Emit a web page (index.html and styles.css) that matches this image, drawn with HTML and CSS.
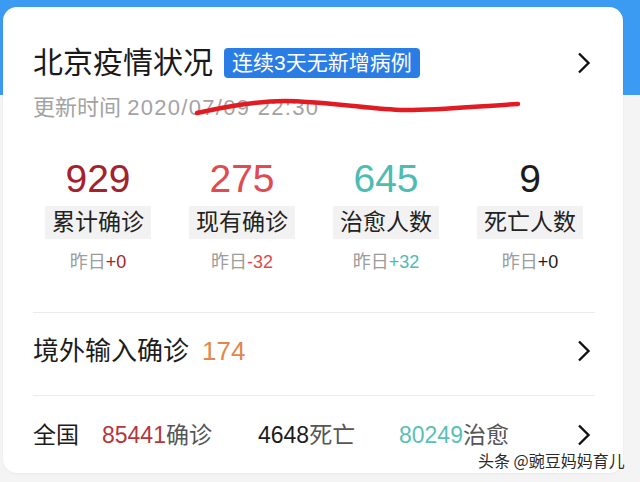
FILE: index.html
```html
<!DOCTYPE html>
<html lang="zh-CN">
<head>
  <meta charset="UTF-8">
  <meta name="viewport" content="width=device-width, initial-scale=1.0">
  <title>北京疫情状况</title>
  <link rel="stylesheet" href="styles.css">
</head>
<body>
  <div class="page">
    <div class="card">
      <div class="head">
        <h1 class="title">北京疫情状况</h1>
        <span class="badge">连续3天无新增病例</span>
        <svg class="chev" width="14" height="22" viewBox="0 0 14 22"><path d="M2 1.5 L11.5 11 L2 20.5"/></svg>
      </div>
      <p class="update">更新时间 <span class="date">2020/07/09 22:30</span></p>

      <ul class="stats">
        <li class="stat">
          <div class="num c-total">929</div>
          <div class="label">累计确诊</div>
          <div class="delta">昨日<span class="c-total">+0</span></div>
        </li>
        <li class="stat">
          <div class="num c-now">275</div>
          <div class="label">现有确诊</div>
          <div class="delta">昨日<span class="c-now">-32</span></div>
        </li>
        <li class="stat">
          <div class="num c-cure">645</div>
          <div class="label">治愈人数</div>
          <div class="delta">昨日<span class="c-cure">+32</span></div>
        </li>
        <li class="stat">
          <div class="num c-dead">9</div>
          <div class="label">死亡人数</div>
          <div class="delta">昨日<span class="c-dead">+0</span></div>
        </li>
      </ul>

      <div class="row import">
        <span>境外输入确诊</span>
        <span class="import-num">174</span>
        <svg class="chev" width="14" height="22" viewBox="0 0 14 22"><path d="M2 1.5 L11.5 11 L2 20.5"/></svg>
      </div>

      <div class="row nation">
        <span class="c-dead">全国</span>
        <span><span class="c-nat-total">85441</span>确诊</span>
        <span><span class="c-dead">4648</span>死亡</span>
        <span><span class="c-nat-cure">80249</span>治愈</span>
        <svg class="chev" width="14" height="22" viewBox="0 0 14 22"><path d="M2 1.5 L11.5 11 L2 20.5"/></svg>
      </div>
    </div>

    <!-- 红笔划线 -->
    <svg class="scribble" width="640" height="482" viewBox="0 0 640 482">
      <path d="M197 113 C 225 107, 255 101, 285 101 C 320 101, 360 108, 400 110 C 430 111, 480 106, 518 104"/>
    </svg>
    <div class="watermark">头条 @豌豆妈妈育儿</div>
  </div>
</body>
</html>
```

FILE: styles.css
```css
body {
  margin: 0;
  font-family: "Liberation Sans", "Noto Sans CJK SC", sans-serif;
  color: #1c1c1c;
}
ul, li, p, h1 {
  list-style: none;
  margin: 0;
  padding: 0;
}
.page {
  position: relative;
  width: 640px;
  height: 482px;
  box-sizing: border-box;
  padding: 7px 17px 0 3px;
  background: linear-gradient(#3b9af2 0, #3b9af2 95px, #f4f4f4 95px);
  overflow: hidden;
}
.card {
  height: 466px;
  box-sizing: border-box;
  padding: 36px 28px 0 30px;
  background: #fff;
  border-radius: 14px;
  box-shadow: 0 1px 3px rgba(0, 0, 0, .05);
}
.chev {
  margin-left: auto;
  margin-right: 4px;
  flex-shrink: 0;
}
.chev path {
  fill: none;
  stroke: #111;
  stroke-width: 2.4;
}

/* 标题 */
.head {
  display: flex;
  align-items: center;
  height: 40px;
}
.title {
  font-size: 30px;
  line-height: 40px;
  font-weight: 400;
  color: #1a1a1a;
}
.badge {
  margin-left: 11px;
  padding: 0 8px;
  height: 30px;
  line-height: 30px;
  font-size: 21px;
  color: #fff;
  background: #2b7de6;
  border-radius: 4px;
}
.update {
  margin-top: 10px;
  font-size: 22px;
  line-height: 30px;
  color: #a3a3a3;
}
.date {
  letter-spacing: 1.3px;
}

/* 四项数据 */
.stats {
  display: grid;
  grid-template-columns: repeat(4, 1fr);
  margin: 34px -7px 0 -7px;
}
.stat {
  display: flex;
  flex-direction: column;
  align-items: center;
}
.num {
  font-size: 39px;
  line-height: 44px;
}
.label {
  margin-top: 5px;
  padding: 0 7px;
  font-size: 23px;
  line-height: 33px;
  background: #f2f2f2;
  color: #222;
}
.delta {
  margin-top: 10px;
  font-size: 18px;
  line-height: 26px;
  color: #9c9c9c;
}
.c-total { color: #a4222c; }
.c-now { color: #e04a50; }
.c-cure { color: #4dbcb3; }
.c-dead { color: #1c1c1c; }
.c-nat-total { color: #b3373d; }
.c-nat-cure { color: #5bbfb5; }

/* 列表行 */
.row {
  border-top: 1px solid #ebebeb;
}
.import {
  display: flex;
  align-items: center;
  margin-top: 37px;
  padding: 24px 0 30px;
  font-size: 26px;
  line-height: 28px;
  color: #1c1c1c;
}
.import-num {
  margin-left: 13px;
  color: #e2864a;
}
.nation {
  display: grid;
  grid-template-columns: 69px 156px 141px 1fr auto;
  align-items: center;
  padding-top: 25px;
  font-size: 23px;
  line-height: 28px;
  color: #555;
}

.scribble {
  position: absolute;
  left: 0;
  top: 0;
  pointer-events: none;
}
.scribble path {
  fill: none;
  stroke: #e21b23;
  stroke-width: 4.5;
  stroke-linecap: round;
}
.watermark {
  position: absolute;
  left: 478px;
  top: 450px;
  font-family: "Noto Sans CJK SC", sans-serif;
  font-size: 16px;
  line-height: 20px;
  color: #2a2a2a;
  text-shadow: 0 0 2px #fff, 0 0 2px #fff, 0 0 3px #fff;
}
```
